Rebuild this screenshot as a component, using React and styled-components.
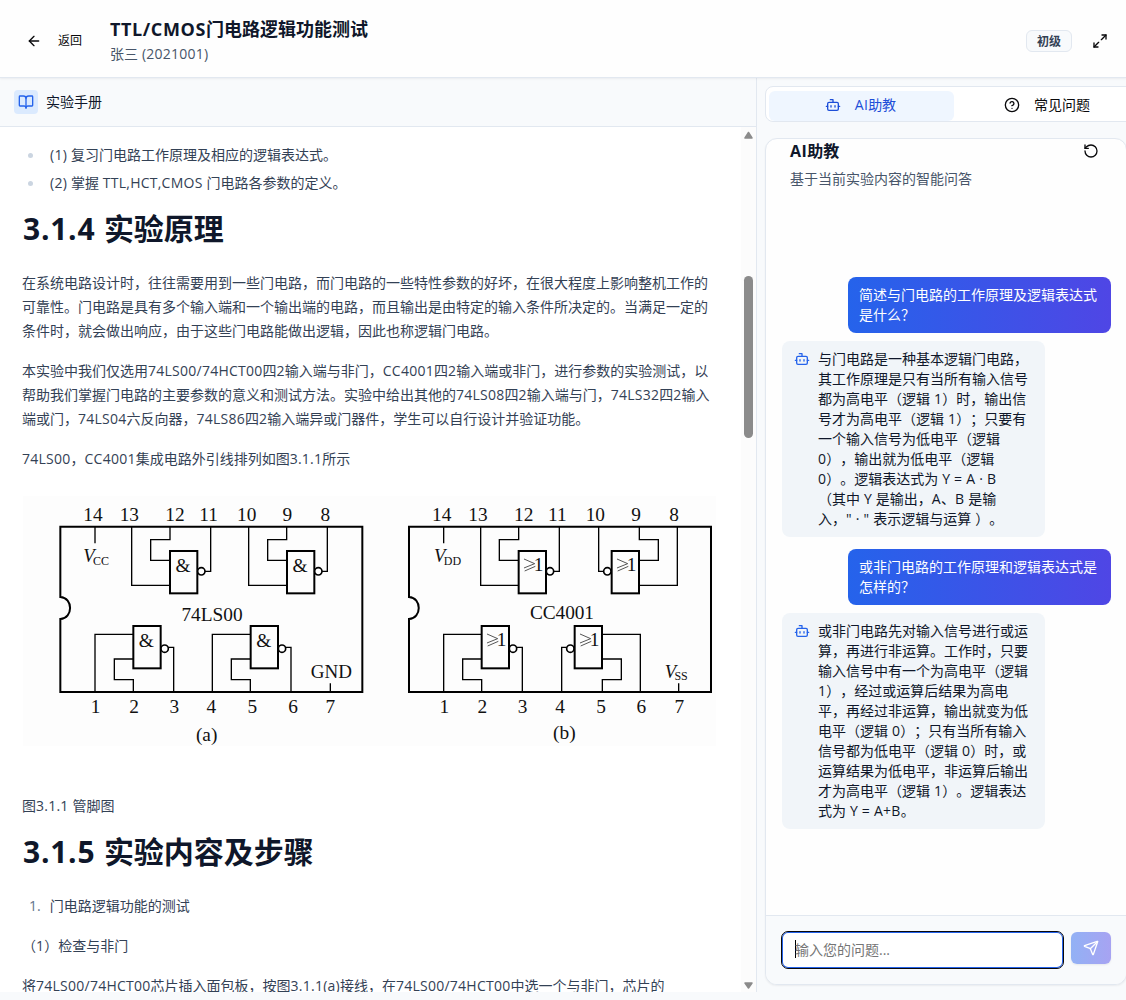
import React from 'react';
import styled, { createGlobalStyle, css } from 'styled-components';
import { ArrowLeft, BookOpen, Bot, CircleHelp, Maximize2, RotateCcw, Send } from 'lucide-react';

const Global = createGlobalStyle`
  * { box-sizing: border-box; }
  body {
    margin: 0;
    overflow: hidden;
    font-family: "Open Sans", "Noto Sans", "Noto Sans CJK SC", sans-serif;
    font-size: 14px;
    color: #0f172a;
    background: #f8fafc;
    text-spacing-trim: space-all;
  }
  h1, h2, h3, p, ul, ol { margin: 0; padding: 0; font-weight: inherit; }
  button, input { font: inherit; }
`;

const Latin = styled.span`
  letter-spacing: ${(p) => p.$track}px;
`;

/* Sets the tracking of the Latin runs inside mixed Chinese and Latin text. */
function Mixed({ children, track = 0.25 }) {
  return children
    .split(/([\x20-\x7e·]+)/)
    .filter(Boolean)
    .map((part, i) =>
      /^[\x20-\x7e·]+$/.test(part) ? <Latin key={i} $track={track}>{part}</Latin> : part
    );
}

const Page = styled.div`
  width: 1126px;
  height: 1000px;
  overflow: hidden;
  display: flex;
  flex-direction: column;
  background: #f8fafc;
`;

const Header = styled.header`
  position: relative;
  height: 78px;
  flex: none;
  display: flex;
  align-items: center;
  padding: 4px 18px 0 26px;
  background: #fefefe;
  border-bottom: 1px solid #e2e8f0;
  box-shadow: 0 1px 2px rgba(15, 23, 42, 0.06);
`;

const BackButton = styled.button`
  display: flex;
  align-items: center;
  gap: 16px;
  width: 84px;
  padding: 0;
  border: 0;
  background: none;
  color: #09090b;
  font-size: 12px;
  white-space: nowrap;
`;

const Raised = styled.span`
  padding-bottom: 2px;
`;

const Heading = styled.div`
  flex: 1;
`;

const Title = styled.h1`
  margin-top: -2px;
  padding-bottom: 1px;
  font-size: 18px;
  line-height: 28px;
  font-weight: 700;
  white-space: nowrap;
`;

const Student = styled.p`
  line-height: 20px;
  color: #475569;
`;

const Level = styled.span`
  width: 46px;
  height: 22px;
  display: flex;
  align-items: center;
  justify-content: center;
  margin-right: 20px;
  border: 1px solid #e2e8f0;
  border-radius: 6px;
  background: #f8fafc;
  color: #334155;
  font-size: 12px;
  font-weight: 600;
`;

const IconButton = styled.button`
  display: flex;
  padding: 0;
  border: 0;
  background: none;
  color: #09090b;
`;

const Main = styled.main`
  display: flex;
  height: 914px;
`;

const Manual = styled.section`
  width: 757px;
  flex: none;
  display: flex;
  flex-direction: column;
  border-right: 1px solid #e2e8f0;
  background: #fff;
`;

const ManualHeader = styled.div`
  height: 49px;
  flex: none;
  display: flex;
  align-items: center;
  gap: 8px;
  padding-left: 14px;
  background: #f8fafc;
  border-bottom: 1px solid #e2e8f0;
`;

const BookBadge = styled.span`
  width: 24px;
  height: 24px;
  display: flex;
  align-items: center;
  justify-content: center;
  border-radius: 4px;
  background: #dbeafe;
  color: #2563eb;
`;

const ManualBody = styled.div`
  flex: 1;
  min-height: 0;
  display: flex;
`;

const Article = styled.article`
  flex: 1;
  min-width: 0;
  overflow: hidden;
  padding: 16px 0 0 22px;
  color: #334155;
  line-height: 24px;
`;

const Line = styled.span`
  display: block;
  white-space: nowrap;
`;

const Bullets = styled.ul`
  display: flex;
  flex-direction: column;
  gap: 4px;
  list-style: none;
`;

const BulletItem = styled.li`
  display: flex;
  align-items: center;
  gap: 18px;
  padding-left: 6px;
  &::before {
    content: "";
    width: 5px;
    height: 5px;
    margin-right: -1px;
    border-radius: 50%;
    background: #cbd5e1;
  }
`;

const SectionTitle = styled.h2`
  margin: 16px 0 24px;
  padding-left: 1px;
  font-size: 30px;
  line-height: 36px;
  font-weight: 700;
  color: #0f172a;
  white-space: nowrap;
`;

const Paragraph = styled.p`
  margin-bottom: 16px;
`;

const Figure = styled.svg`
  display: block;
  width: 693px;
  height: 250px;
  margin: 25px 0 48px 1px;
`;

const Step = styled.p`
  display: flex;
  gap: 9px;
  padding-left: 7px;
  margin-bottom: 16px;
`;

const StepNumber = styled.span`
  color: #64748b;
`;

const ScrollTrack = styled.div`
  width: 15px;
  flex: none;
  display: flex;
  flex-direction: column;
  align-items: center;
  padding: 4px 0 3px;
  background: #fcfcfc;
`;

const ScrollThumb = styled.div`
  width: 9px;
  height: 162px;
  margin-top: 137px;
  margin-bottom: auto;
  border-radius: 5px;
  background: #8b8b8b;
`;

const Side = styled.aside`
  flex: 1;
  min-width: 0;
  overflow: hidden;
  padding: 8px 0 0 8px;
`;

const Tabs = styled.div`
  width: 380px;
  height: 36px;
  display: flex;
  padding: 4px 3px 0;
  border: 1px solid #e2e8f0;
  border-radius: 8px;
  background: #fff;
`;

const Tab = styled.button`
  width: 185px;
  height: 30px;
  flex: none;
  display: flex;
  align-items: center;
  justify-content: center;
  gap: 14px;
  padding: ${(p) => (p.$active ? '0 2px 2px 0' : '0 0 2px 1px')};
  border: 0;
  border-radius: 6px;
  background: ${(p) => (p.$active ? '#eff6ff' : 'transparent')};
  color: ${(p) => (p.$active ? '#1d4ed8' : '#09090b')};
`;

const Card = styled.section`
  width: 362px;
  height: 847px;
  margin-top: 16px;
  display: flex;
  flex-direction: column;
  overflow: hidden;
  border: 1px solid #e2e8f0;
  border-radius: 12px;
  background: #fefefe;
  box-shadow: 0 1px 2px rgba(15, 23, 42, 0.06);
`;

const CardHeader = styled.div`
  height: 138px;
  flex: none;
  padding: 0 27px 0 24px;
`;

const CardTitleRow = styled.div`
  display: flex;
  align-items: center;
  justify-content: space-between;
  height: 24px;
`;

const CardTitle = styled.h3`
  font-size: 16px;
  line-height: 24px;
  font-weight: 700;
`;

const CardSubtitle = styled.p`
  margin-top: 6px;
  line-height: 20px;
  color: #475569;
`;

const Messages = styled.div`
  flex: 1;
  display: flex;
  flex-direction: column;
  padding: 0 15px 0 16px;
`;

const Bubble = styled.div`
  width: 263px;
  display: flex;
  border-radius: 8px;
  line-height: 20px;
  ${(p) =>
    p.$user
      ? css`
          align-self: flex-end;
          padding: 8px 11px;
          margin-bottom: 8px;
          color: #fff;
          background: linear-gradient(90deg, #2563eb, #4f46e5);
        `
      : css`
          gap: 8px;
          padding: 8px 12px;
          margin-bottom: 12px;
          background: #f1f5f9;
          svg { flex: none; margin-top: 2px; color: #2563eb; }
        `}
`;

const Composer = styled.form`
  height: 69px;
  flex: none;
  display: flex;
  gap: 7px;
  padding: 15px 15px;
  border-top: 1px solid #e2e8f0;
  background: #f8fafc;
`;

const InputFrame = styled.div`
  width: 283px;
  height: 38px;
  display: flex;
  align-items: center;
  padding: 0 0 2px 13px;
  border: 1px solid #09090b;
  border-radius: 7px;
  background: #fff;
  box-shadow: inset 0 0 0 1px #2563eb;
  color: #757575;
`;

const Caret = styled.span`
  width: 1px;
  height: 18px;
  margin-right: -1px;
  background: #000;
`;

const SendButton = styled.button`
  width: 40px;
  height: 32px;
  margin-top: 1px;
  display: flex;
  align-items: center;
  justify-content: center;
  padding: 0;
  border: 0;
  border-radius: 6px;
  color: #fff;
  background: linear-gradient(90deg, #92b1f5, #a7a3f2);
  box-shadow: 0 1px 2px rgba(15, 23, 42, 0.08);
`;

const Arrow = ({ down }) => (
  <svg width="9" height="8" viewBox="0 0 9 8">
    <path
      d={down ? 'M1 2H8L4.5 7Z' : 'M1 7H8L4.5 1.5Z'}
      fill="#8b8b8b"
      stroke="#8b8b8b"
      strokeWidth="1.5"
      strokeLinejoin="round"
    />
  </svg>
);

const SERIF = '"Liberation Serif", serif';

const Label = ({ x, y, children, size = 58, width }) => (
  <text
    x={x}
    y={y}
    fontFamily={SERIF}
    fontSize={size}
    textAnchor="middle"
    textLength={width}
    fill="#111"
  >
    {children}
  </text>
);

const Supply = ({ x, y, sub }) => (
  <text x={x} y={y} fontFamily={SERIF} fill="#111">
    <tspan fontSize="56" fontStyle="italic">V</tspan>
    <tspan fontSize="36" dx="-5" dy="8">{sub}</tspan>
  </text>
);

/* A logic gate body with its output ring on the right or on the left. */
const Gate = ({ x, y, symbol, left }) => (
  <g>
    <rect x={x} y={y} width="82" height="127" fill="none" stroke="#000" strokeWidth="6" />
    <circle cx={left ? x - 13 : x + 94} cy={y + (y > 300 ? 68 : 61)} r="11" fill="#fff" stroke="#000" strokeWidth="5" />
    {symbol === '&' ? (
      <Label x={x + 39} y={y + 64}>&amp;</Label>
    ) : (
      <g>
        <path d={`M${x + 16} ${y + 24}L${x + 48} ${y + 38}L${x + 16} ${y + 51}M${x + 18} ${y + 60}L${x + 50} ${y + 46}`} fill="none" stroke="#333" strokeWidth="2.5" />
        <Label x={x + 60} y={y + 60}>1</Label>
      </g>
    )}
  </g>
);

const Shell = ({ x }) => (
  <path
    d={`M${x} 110H${x + 906}V606H${x}V387C${x + 39} 385 ${x + 39} 323 ${x} 321Z`}
    fill="none"
    stroke="#000"
    strokeWidth="6"
  />
);

const Pins = ({ top, bottom }) => (
  <g>
    {top.map((x, i) => <Label key={x} x={x - 2} y={93}>{14 - i}</Label>)}
    {bottom.map((x, i) => <Label key={x} x={x} y={670}>{i + 1}</Label>)}
  </g>
);

const Wires = ({ d }) => <path d={d} fill="none" stroke="#000" strokeWidth="4" />;

function PinDiagram() {
  return (
    <Figure viewBox="23 496 693 250">
      <rect x="23" y="496" width="693" height="250" fill="#fdfdfd" />
      <g transform="translate(20 490) scale(0.33333)">
        <Shell x={121} />
        <Pins top={[221, 330, 467, 568, 682, 804, 918]} bottom={[227, 342, 463, 574, 697, 819, 931]} />
        <Wires d="M225 110V160M335 110V286H450M450 110V149H392V211H450M553 244H572V110M686 110V286H801M800 110V149H743V211H801M904 244H922V110" />
        <Wires d="M225 606V433H340M340 606V569H283V507H340M444 472H461V606M577 606V433H692M691 606V569H634V507H692M796 472H813V606M931 606V580" />
        <Gate x={450} y={183} symbol="&" />
        <Gate x={801} y={183} symbol="&" />
        <Gate x={340} y={408} symbol="&" />
        <Gate x={692} y={408} symbol="&" />
        <Supply x={190} y={216} sub="CC" />
        <Label x={576} y={393}>74LS00</Label>
        <Label x={934} y={563} size={57} width={124}>GND</Label>
        <Label x={560} y={753}>(a)</Label>
      </g>
      <g transform="translate(370 490) scale(0.33333)">
        <Shell x={117} />
        <Pins top={[217, 326, 463, 564, 678, 800, 914]} bottom={[223, 337, 458, 570, 693, 814, 928]} />
        <Wires d="M221 110V160M332 110V286H446M446 110V149H388V211H446M549 244H568V110M700 244H686V110M808 110V149H865V211H807M807 286H922V110" />
        <Wires d="M221 606V433H335M335 606V569H278V507H335M440 472H457V606M590 472H575V606M697 606V569H754V507H697M697 433H811V606M926 606V580" />
        <Gate x={446} y={183} symbol="or" />
        <Gate x={725} y={183} symbol="or" left />
        <Gate x={335} y={408} symbol="or" />
        <Gate x={614} y={408} symbol="or" left />
        <Supply x={192} y={216} sub="DD" />
        <Supply x={884} y={563} sub="SS" />
        <Label x={576} y={386} width={192}>CC4001</Label>
        <Label x={583} y={748}>(b)</Label>
      </g>
    </Figure>
  );
}

const paragraphs = [
  [
    '在系统电路设计时，往往需要用到一些门电路，而门电路的一些特性参数的好坏，在很大程度上影响整机工作的',
    '可靠性。门电路是具有多个输入端和一个输出端的电路，而且输出是由特定的输入条件所决定的。当满足一定的',
    '条件时，就会做出响应，由于这些门电路能做出逻辑，因此也称逻辑门电路。',
  ],
  [
    '本实验中我们仅选用74LS00/74HCT00四2输入端与非门，CC4001四2输入端或非门，进行参数的实验测试，以',
    '帮助我们掌握门电路的主要参数的意义和测试方法。实验中给出其他的74LS08四2输入端与门，74LS32四2输入',
    '端或门，74LS04六反向器，74LS86四2输入端异或门器件，学生可以自行设计并验证功能。',
  ],
  ['74LS00，CC4001集成电路外引线排列如图3.1.1所示'],
];

const messages = [
  { user: true, lines: ['简述与门电路的工作原理及逻辑表达式', '是什么？'] },
  {
    lines: [
      '与门电路是一种基本逻辑门电路，',
      '其工作原理是只有当所有输入信号',
      '都为高电平（逻辑 1）时，输出信',
      '号才为高电平（逻辑 1）；只要有',
      '一个输入信号为低电平（逻辑',
      '0），输出就为低电平（逻辑',
      '0）。逻辑表达式为 Y = A · B',
      '（其中 Y 是输出，A、B 是输',
      '入，" · " 表示逻辑与运算 ）。',
    ],
  },
  { user: true, lines: ['或非门电路的工作原理和逻辑表达式是', '怎样的？'] },
  {
    lines: [
      '或非门电路先对输入信号进行或运',
      '算，再进行非运算。工作时，只要',
      '输入信号中有一个为高电平（逻辑',
      '1），经过或运算后结果为高电',
      '平，再经过非运算，输出就变为低',
      '电平（逻辑 0）；只有当所有输入',
      '信号都为低电平（逻辑 0）时，或',
      '运算结果为低电平，非运算后输出',
      '才为高电平（逻辑 1）。逻辑表达',
      '式为 Y = A+B。',
    ],
  },
];

const Lines = ({ items }) => items.map((t) => <Line key={t}><Mixed>{t}</Mixed></Line>);

export default function App() {
  return (
    <Page>
      <Global />
      <Header>
        <BackButton><ArrowLeft size={16} /><Raised>返回</Raised></BackButton>
        <Heading>
          <Title><Mixed track={0.6}>TTL/CMOS门电路逻辑功能测试</Mixed></Title>
          <Student><Mixed track={0.25}>张三 (2021001)</Mixed></Student>
        </Heading>
        <Level>初级</Level>
        <IconButton><Maximize2 size={16} /></IconButton>
      </Header>
      <Main>
        <Manual>
          <ManualHeader>
            <BookBadge><BookOpen size={16} /></BookBadge>
            <Raised>实验手册</Raised>
          </ManualHeader>
          <ManualBody>
            <Article>
              <Bullets>
                <BulletItem><Line><Mixed>(1) 复习门电路工作原理及相应的逻辑表达式。</Mixed></Line></BulletItem>
                <BulletItem><Line><Mixed>(2) 掌握 TTL,HCT,CMOS 门电路各参数的定义。</Mixed></Line></BulletItem>
              </Bullets>
              <SectionTitle><Mixed track={0.75}>3.1.4 实验原理</Mixed></SectionTitle>
              {paragraphs.map((p) => (
                <Paragraph key={p[0]}><Lines items={p} /></Paragraph>
              ))}
              <PinDiagram />
              <Paragraph><Mixed>图3.1.1 管脚图</Mixed></Paragraph>
              <SectionTitle><Mixed track={0.75}>3.1.5 实验内容及步骤</Mixed></SectionTitle>
              <Step><StepNumber>1.</StepNumber>门电路逻辑功能的测试</Step>
              <Paragraph><Mixed>（1）检查与非门</Mixed></Paragraph>
              <Paragraph>
                <Line><Mixed>将74LS00/74HCT00芯片插入面包板，按图3.1.1(a)接线，在74LS00/74HCT00中选一个与非门，芯片的</Mixed></Line>
              </Paragraph>
            </Article>
            <ScrollTrack>
              <Arrow />
              <ScrollThumb />
              <Arrow down />
            </ScrollTrack>
          </ManualBody>
        </Manual>
        <Side>
          <Tabs>
            <Tab $active><Bot size={16} /><Raised><Mixed>AI助教</Mixed></Raised></Tab>
            <Tab><CircleHelp size={16} /><Raised>常见问题</Raised></Tab>
          </Tabs>
          <Card>
            <CardHeader>
              <CardTitleRow>
                <CardTitle><Mixed track={0.4}>AI助教</Mixed></CardTitle>
                <IconButton><RotateCcw size={16} /></IconButton>
              </CardTitleRow>
              <CardSubtitle>基于当前实验内容的智能问答</CardSubtitle>
            </CardHeader>
            <Messages>
              {messages.map((m, i) => (
                <Bubble key={i} $user={m.user}>
                  {!m.user && <Bot size={16} />}
                  <div><Lines items={m.lines} /></div>
                </Bubble>
              ))}
            </Messages>
            <Composer>
              <InputFrame><Caret />输入您的问题...</InputFrame>
              <SendButton><Send size={16} /></SendButton>
            </Composer>
          </Card>
        </Side>
      </Main>
    </Page>
  );
}
